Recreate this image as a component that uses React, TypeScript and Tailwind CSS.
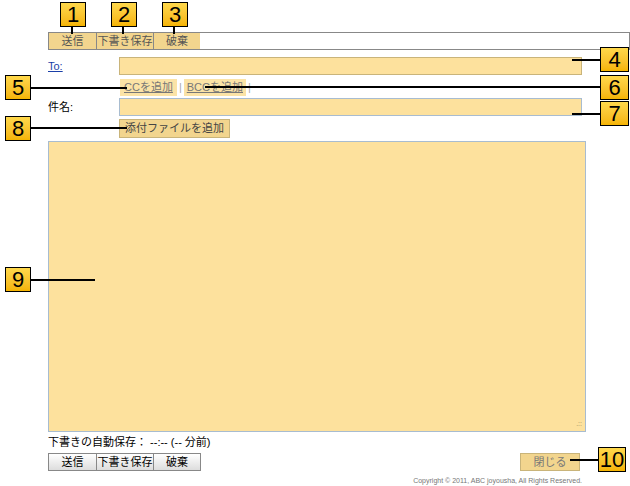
const font = { fontFamily: '"Liberation Sans", "Noto Sans CJK JP", sans-serif' };

function Badge({ n, x, y, w = 26 }: { n: string; x: number; y: number; w?: number }) {
  return (
    <div
      className="absolute flex h-[25px] items-center justify-center border border-black bg-gradient-to-b from-[#ffd84a] to-[#f5b400] text-[22px] leading-none text-black"
      style={{ left: x, top: y, width: w }}
    >
      {n}
    </div>
  );
}

function Line({ x, y, w, h }: { x: number; y: number; w: number; h: number }) {
  return <div className="absolute bg-black" style={{ left: x, top: y, width: w, height: h }} />;
}

function BtnGroup({ hl }: { hl?: boolean }) {
  const labels = ["送信", "下書き保存", "破棄"];
  const widths = ["w-[47px]", "w-[57px]", "w-[47px]"];
  return (
    <div className="flex h-[18px] border border-[#888]">
      {labels.map((l, i) => (
        <div
          key={l}
          className={`${widths[i]} flex items-center justify-center text-[11px] ${i > 0 ? "border-l border-[#888]" : ""} ${
            hl ? "bg-[#f2d58e] text-[#555]" : "bg-gradient-to-b from-white to-[#ddd] text-black"
          }`}
        >
          {l}
        </div>
      ))}
    </div>
  );
}

export default function App() {
  return (
    <div className="relative h-[486px] w-[630px] bg-white text-[11px] text-black" style={font}>
      <div className="flex flex-col pl-[48px] pt-[32px]">
        <BtnGroup hl />
        <div className="mt-[7px] flex h-[18px] items-center">
          <span className="w-[71px] text-[#1a3fa8] underline">To:</span>
          <div className="h-[18px] w-[463px] border border-[#c9b47a] bg-[#fde19d]" />
        </div>
        <div className="mt-[4px] flex h-[17px] items-center pl-[72px] text-[11px] text-[#777]">
          <span className="bg-[#fbe3a6] px-[4px] underline">CCを追加</span>
          <span className="mx-[2px] text-[#aaa]">|</span>
          <span className="bg-[#fbe3a6] px-[3px] underline">BCCを追加</span>
          <span className="ml-[2px] text-[#aaa]">|</span>
        </div>
        <div className="mt-[2px] flex h-[18px] items-center">
          <span className="w-[71px]">件名:</span>
          <div className="h-[18px] w-[463px] border border-[#a8bcd0] bg-[#fde19d]" />
        </div>
        <div className="mt-[3px] pl-[71px]">
          <div className="inline-flex h-[19px] items-center border border-[#c9b47a] bg-[#f2d58e] px-[5px] text-[#444]">
            添付ファイルを追加
          </div>
        </div>
        <div className="relative mt-[3px] h-[291px] w-[538px] border border-[#a8bcd0] bg-[#fde19d]">
          <span className="absolute bottom-[2px] right-[3px] text-[7px] text-[#a09060]">.::</span>
        </div>
        <div className="mt-[2px] h-[14px]">下書きの自動保存： --:-- (-- 分前)</div>
        <div className="mt-[5px] flex items-center justify-between pr-[50px]">
          <BtnGroup />
          <div className="flex h-[18px] w-[60px] items-center justify-center border border-[#c9b47a] bg-[#f2d58e] text-[#777]">
            閉じる
          </div>
        </div>
        <div className="mt-[5px] pr-[48px] text-right text-[7px] text-[#777]">
          Copyright © 2011, ABC joyousha, All Rights Reserved.
        </div>
      </div>

      <Line x={71} y={26} w={2} h={8} />
      <Line x={122} y={26} w={2} h={8} />
      <Line x={173} y={26} w={2} h={8} />
      <Badge n="1" x={60} y={2} />
      <Badge n="2" x={111} y={2} />
      <Badge n="3" x={162} y={2} />

      <Line x={572} y={59} w={28} h={2} />
      <Badge n="4" x={600} y={47} w={29} />
      <Line x={31} y={87} w={96} h={2} />
      <Badge n="5" x={5} y={75} />
      <Line x={205} y={86} w={395} h={2} />
      <Badge n="6" x={600} y={75} w={29} />
      <Line x={572} y={113} w={28} h={2} />
      <Badge n="7" x={600} y={101} w={29} />
      <Line x={31} y={127} w={96} h={2} />
      <Badge n="8" x={5} y={116} />
      <Line x={31} y={279} w={64} h={2} />
      <Badge n="9" x={5} y={267} />
      <Line x={570} y={459} w={28} h={2} />
      <Badge n="10" x={598} y={447} w={28} />
    </div>
  );
}
